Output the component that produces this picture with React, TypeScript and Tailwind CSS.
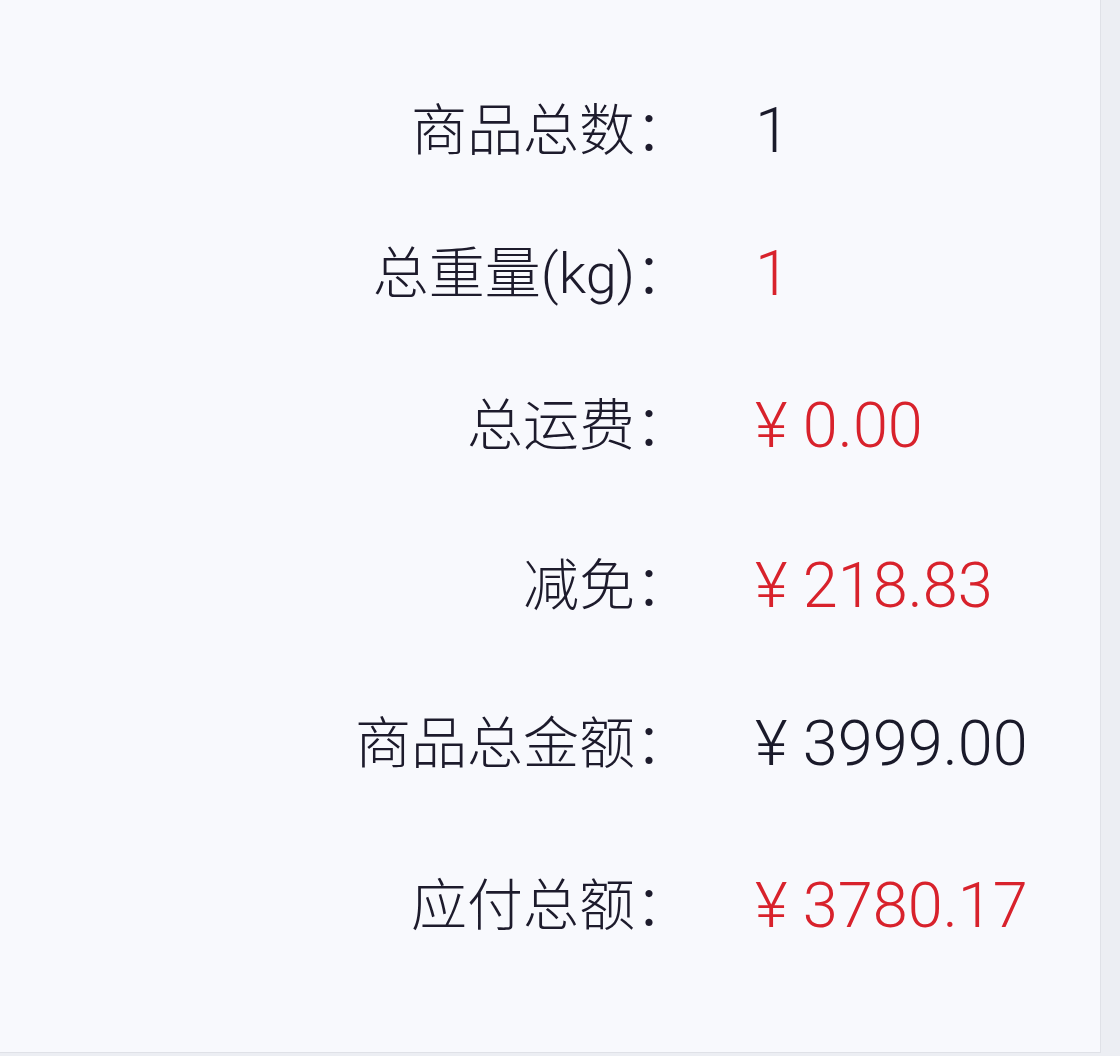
const rows: { label: string; value: string; red: boolean; h: string }[] = [
  { label: "商品总数：", value: "1", red: false, h: "h-[143px]" },
  { label: "总重量(kg)：", value: "1", red: true, h: "h-[152px]" },
  { label: "总运费：", value: "¥ 0.00", red: true, h: "h-[160px]" },
  { label: "减免：", value: "¥ 218.83", red: true, h: "h-[158px]" },
  { label: "商品总金额：", value: "¥ 3999.00", red: false, h: "h-[162px]" },
  { label: "应付总额：", value: "¥ 3780.17", red: true, h: "h-[110px]" },
];

export default function App() {
  return (
    <div className="w-[1120px] h-[1056px] bg-[#eceef3] overflow-hidden">
      <div
        className="w-[1101px] h-[1053px] bg-[#f8f9fd] border-r border-b border-[#dfe1e7] pt-[95px]"
        style={{ fontFamily: 'Roboto, "Noto Sans CJK SC", sans-serif' }}
      >
        {rows.map((r) => (
          <div key={r.label} className={`flex items-start ${r.h}`}>
            <div className="w-[691px] text-right text-[56px] leading-[72px] font-light text-[#1d1b2c]">
              {r.label}
            </div>
            <div
              className={
                r.red
                  ? "pl-[64px] text-[63px] leading-[72px] font-light text-[#d8222c]"
                  : "pl-[64px] text-[63px] leading-[72px] font-light text-[#1a1a2a]"
              }
            >
              {r.value}
            </div>
          </div>
        ))}
      </div>
    </div>
  );
}
